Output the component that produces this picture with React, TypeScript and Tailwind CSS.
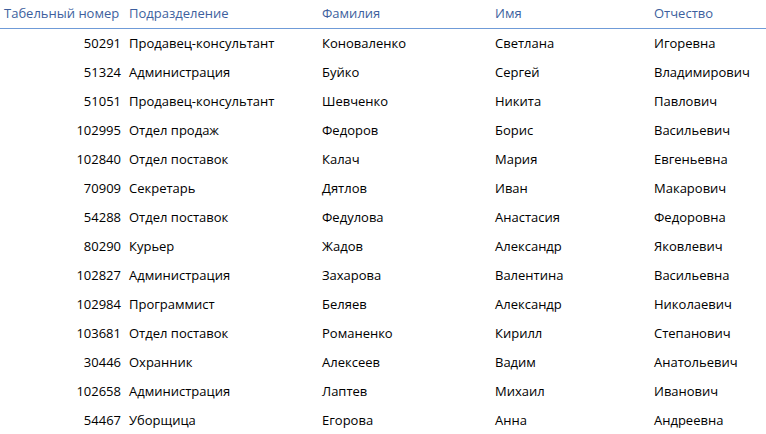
const rows: [string, string, string, string, string][] = [
  ['50291', 'Продавец-консультант', 'Коноваленко', 'Светлана', 'Игоревна'],
  ['51324', 'Администрация', 'Буйко', 'Сергей', 'Владимирович'],
  ['51051', 'Продавец-консультант', 'Шевченко', 'Никита', 'Павлович'],
  ['102995', 'Отдел продаж', 'Федоров', 'Борис', 'Васильевич'],
  ['102840', 'Отдел поставок', 'Калач', 'Мария', 'Евгеньевна'],
  ['70909', 'Секретарь', 'Дятлов', 'Иван', 'Макарович'],
  ['54288', 'Отдел поставок', 'Федулова', 'Анастасия', 'Федоровна'],
  ['80290', 'Курьер', 'Жадов', 'Александр', 'Яковлевич'],
  ['102827', 'Администрация', 'Захарова', 'Валентина', 'Васильевна'],
  ['102984', 'Программист', 'Беляев', 'Александр', 'Николаевич'],
  ['103681', 'Отдел поставок', 'Романенко', 'Кирилл', 'Степанович'],
  ['30446', 'Охранник', 'Алексеев', 'Вадим', 'Анатольевич'],
  ['102658', 'Администрация', 'Лаптев', 'Михаил', 'Иванович'],
  ['54467', 'Уборщица', 'Егорова', 'Анна', 'Андреевна'],
]

export default function App() {
  return (
    <div className="w-[766px] h-[434px] overflow-hidden bg-white font-['Open_Sans',sans-serif] text-[13px] text-black">
      <div className="grid grid-cols-[125px_193px_173px_159px_1fr] h-[29px] items-center border-b border-[#6f9bd8] text-[#3d5f9e]">
        <div className="pl-[4px] whitespace-nowrap">Табельный номер</div>
        <div className="pl-[4px]">Подразделение</div>
        <div className="pl-[4px]">Фамилия</div>
        <div className="pl-[4px]">Имя</div>
        <div className="pl-[4px]">Отчество</div>
      </div>
      {rows.map((r) => (
        <div key={r[0] + r[2]} className="grid grid-cols-[125px_193px_173px_159px_1fr] h-[29px] items-center">
          <div className="text-right pr-[4px]">{r[0]}</div>
          <div className="pl-[4px]">{r[1]}</div>
          <div className="pl-[4px]">{r[2]}</div>
          <div className="pl-[4px]">{r[3]}</div>
          <div className="pl-[4px]">{r[4]}</div>
        </div>
      ))}
    </div>
  )
}
